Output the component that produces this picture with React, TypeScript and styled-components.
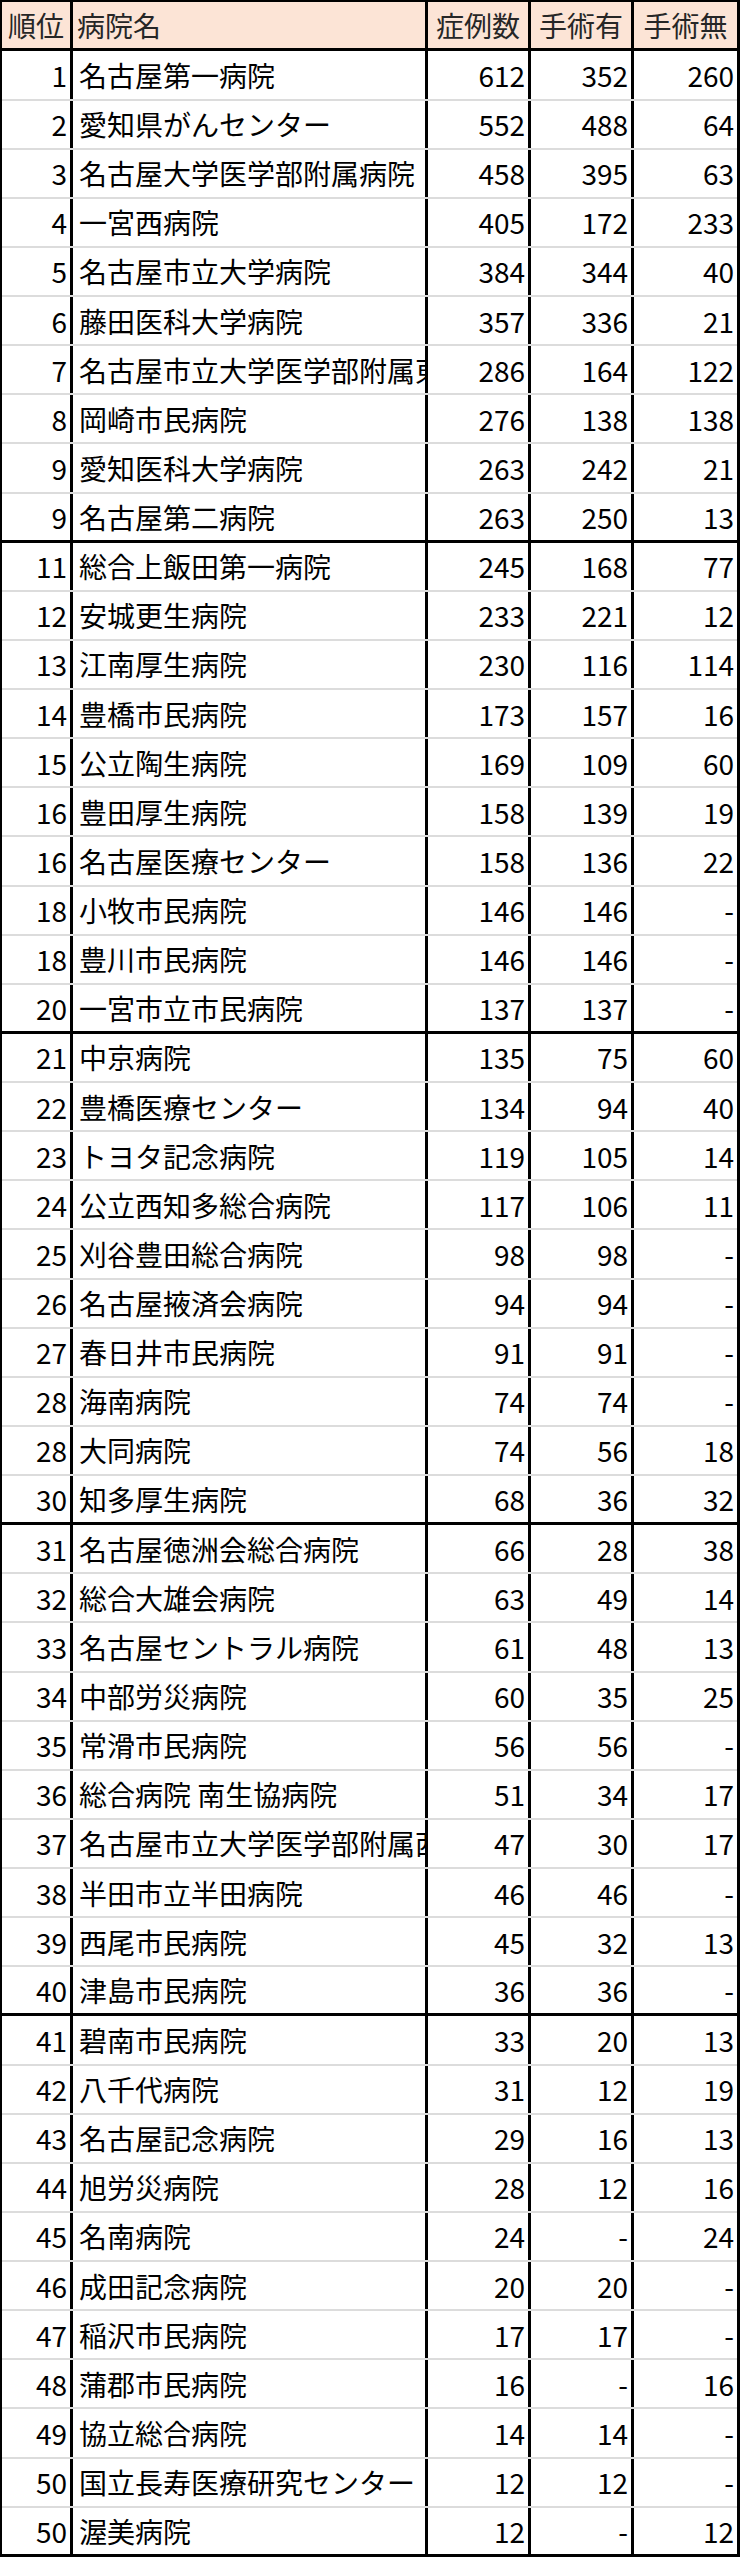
import React from 'react';
import styled, {createGlobalStyle} from 'styled-components';

const GlobalStyle = createGlobalStyle`
  html, body {
    margin: 0;
    padding: 0;
    background: #ffffff;
  }
  body {
    font-family: "Noto Sans CJK JP", "Noto Sans", sans-serif;
    color: #000;
  }
`;

const Sheet = styled.div`
  width: 740px;
  box-sizing: border-box;
  border-top: 2px solid #000;
  border-left: 2px solid #000;
  border-right: 3px solid #000;
  font-size: 28px;
  line-height: 1;
`;

const Columns = `
  display: grid;
  grid-template-columns: 71px 355px 103px 103px 103px;
  box-sizing: border-box;
`;

const HeaderRow = styled.div`
  ${Columns};
  height: 49.4px;
  background: #fce4d6;
  border-bottom: 3px solid #000;
`;

const Row = styled.div<{ $groupEnd?: boolean }>`
  ${Columns};
  height: 49.13px;
  border-bottom: ${p => (p.$groupEnd ? '3px solid #000' : '2px solid #dcdcdc')};
`;

const Cell = styled.div`
  display: flex;
  align-items: center;
  box-sizing: border-box;
  overflow: hidden;
  white-space: nowrap;
  border-right: 3px solid #000;

  &:last-child {
    border-right: none;
  }
`;

const HeadCell = styled(Cell)<{ $left?: boolean }>`
  justify-content: ${p => (p.$left ? 'flex-start' : 'center')};
  padding-left: ${p => (p.$left ? '4px' : '0')};
  color: #262626;
`;

const NameCell = styled(Cell)`
  padding-left: 6px;
`;

const NumCell = styled(Cell)`
  justify-content: flex-end;
  padding-right: 3px;
`;

type Hospital = [string, string, number, number | null, number | null];

const hospitals: Hospital[] = [
  ['1', '名古屋第一病院', 612, 352, 260],
  ['2', '愛知県がんセンター', 552, 488, 64],
  ['3', '名古屋大学医学部附属病院', 458, 395, 63],
  ['4', '一宮西病院', 405, 172, 233],
  ['5', '名古屋市立大学病院', 384, 344, 40],
  ['6', '藤田医科大学病院', 357, 336, 21],
  ['7', '名古屋市立大学医学部附属東部医療センター', 286, 164, 122],
  ['8', '岡崎市民病院', 276, 138, 138],
  ['9', '愛知医科大学病院', 263, 242, 21],
  ['9', '名古屋第二病院', 263, 250, 13],
  ['11', '総合上飯田第一病院', 245, 168, 77],
  ['12', '安城更生病院', 233, 221, 12],
  ['13', '江南厚生病院', 230, 116, 114],
  ['14', '豊橋市民病院', 173, 157, 16],
  ['15', '公立陶生病院', 169, 109, 60],
  ['16', '豊田厚生病院', 158, 139, 19],
  ['16', '名古屋医療センター', 158, 136, 22],
  ['18', '小牧市民病院', 146, 146, null],
  ['18', '豊川市民病院', 146, 146, null],
  ['20', '一宮市立市民病院', 137, 137, null],
  ['21', '中京病院', 135, 75, 60],
  ['22', '豊橋医療センター', 134, 94, 40],
  ['23', 'トヨタ記念病院', 119, 105, 14],
  ['24', '公立西知多総合病院', 117, 106, 11],
  ['25', '刈谷豊田総合病院', 98, 98, null],
  ['26', '名古屋掖済会病院', 94, 94, null],
  ['27', '春日井市民病院', 91, 91, null],
  ['28', '海南病院', 74, 74, null],
  ['28', '大同病院', 74, 56, 18],
  ['30', '知多厚生病院', 68, 36, 32],
  ['31', '名古屋徳洲会総合病院', 66, 28, 38],
  ['32', '総合大雄会病院', 63, 49, 14],
  ['33', '名古屋セントラル病院', 61, 48, 13],
  ['34', '中部労災病院', 60, 35, 25],
  ['35', '常滑市民病院', 56, 56, null],
  ['36', '総合病院 南生協病院', 51, 34, 17],
  ['37', '名古屋市立大学医学部附属西部医療センター', 47, 30, 17],
  ['38', '半田市立半田病院', 46, 46, null],
  ['39', '西尾市民病院', 45, 32, 13],
  ['40', '津島市民病院', 36, 36, null],
  ['41', '碧南市民病院', 33, 20, 13],
  ['42', '八千代病院', 31, 12, 19],
  ['43', '名古屋記念病院', 29, 16, 13],
  ['44', '旭労災病院', 28, 12, 16],
  ['45', '名南病院', 24, null, 24],
  ['46', '成田記念病院', 20, 20, null],
  ['47', '稲沢市民病院', 17, 17, null],
  ['48', '蒲郡市民病院', 16, null, 16],
  ['49', '協立総合病院', 14, 14, null],
  ['50', '国立長寿医療研究センター', 12, 12, null],
  ['50', '渥美病院', 12, null, 12],
];

const show = (n: number | null) => (n === null ? '-' : n);

// thick rule under every 10 rows, last block holds 11
const isGroupEnd = (i: number) => ((i + 1) % 10 === 0 && i < 40) || i === hospitals.length - 1;

function App() {
  return (
    <>
      <GlobalStyle/>
      <Sheet>
        <HeaderRow>
          <HeadCell>順位</HeadCell>
          <HeadCell $left>病院名</HeadCell>
          <HeadCell>症例数</HeadCell>
          <HeadCell>手術有</HeadCell>
          <HeadCell>手術無</HeadCell>
        </HeaderRow>
        {hospitals.map(([rank, name, total, withOp, withoutOp], i) =>
          <Row key={i} $groupEnd={isGroupEnd(i)}>
            <NumCell>{rank}</NumCell>
            <NameCell>{name}</NameCell>
            <NumCell>{show(total)}</NumCell>
            <NumCell>{show(withOp)}</NumCell>
            <NumCell>{show(withoutOp)}</NumCell>
          </Row>
        )}
      </Sheet>
    </>
  );
}

export default App;
